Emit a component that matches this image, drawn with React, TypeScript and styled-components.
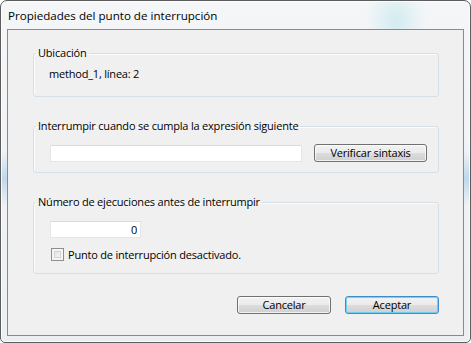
import styled, { createGlobalStyle } from "styled-components";

const GlobalStyle = createGlobalStyle`
	html, body {
		margin: 0;
		padding: 0;
		background: #ffffff;
	}

	body {
		font-family: "Segoe UI", "Open Sans", "Liberation Sans", sans-serif;
		font-size: 11px;
		color: #000000;
	}
`;

const Window = styled.div`
	width: 471px;
	height: 343px;
	box-sizing: border-box;
	display: flex;
	flex-direction: column;
	border: 1px solid #5c5c5c;
	border-radius: 7px 7px 5px 5px;
	overflow: hidden;
	background:
		radial-gradient(ellipse 30px 40px at 395px 20px, rgba(196, 232, 236, 0.7), transparent),
		linear-gradient(to bottom, transparent 44%, rgba(150, 194, 232, 0.55) 52%, transparent 60%),
		linear-gradient(to bottom, #f4f6f8, #eceff2);
	box-shadow: inset 0 0 0 1px rgba(255, 255, 255, 0.8);
`;

const TitleBar = styled.div`
	height: 28px;
	flex: none;
	box-sizing: border-box;
	padding: 7px 0 0 7px;
	line-height: 15px;
	font-size: 11.6px;
`;

const Client = styled.div`
	flex: 1;
	margin: 0 6px 6px;
	border: 1px solid #838b93;
	background: #f0f0f0;
	padding: 15px 24px 0 25px;
	display: flex;
	flex-direction: column;
	letter-spacing: -0.2px;
`;

const Group = styled.fieldset<{ $gap?: number }>`
	margin: ${(p) => p.$gap ?? 0}px 0 0;
	padding: 0;
	min-width: 0;
	border: 1px solid #d5dfe5;
	border-radius: 3px;
	box-shadow: inset 1px 1px 0 #fbfcfd;
`;

const Legend = styled.legend`
	margin-left: 2px;
	padding: 0 2px;
	line-height: 16px;
`;

const GroupBody = styled.div<{ $top: number; $bottom: number; $left?: number }>`
	padding: ${(p) => p.$top}px 11px ${(p) => p.$bottom}px ${(p) => p.$left ?? 16}px;
	display: flex;
	flex-direction: column;
`;

const PlainText = styled.div`
	line-height: 15px;
`;

const Row = styled.div`
	display: flex;
	align-items: center;
	gap: 12px;
`;

const TextBox = styled.input<{ $width: number; $right?: boolean }>`
	width: ${(p) => p.$width}px;
	height: 17px;
	box-sizing: border-box;
	margin: 0;
	padding: 0 3px;
	border: 1px solid #e3e6ea;
	border-top-color: #d8dce1;
	background: #ffffff;
	font: inherit;
	letter-spacing: inherit;
	text-align: ${(p) => (p.$right ? "right" : "left")};
	outline: none;
`;

const Button = styled.button<{ $width: number; $default?: boolean }>`
	width: ${(p) => p.$width}px;
	height: 18px;
	box-sizing: border-box;
	margin: 0;
	padding: 0;
	font: inherit;
	letter-spacing: inherit;
	line-height: 14px;
	color: #000000;
	border: 1px solid ${(p) => (p.$default ? "#3c8fcf" : "#707070")};
	border-radius: 3px;
	background: linear-gradient(
		to bottom,
		#f2f2f2 0%,
		#ebebeb 50%,
		#dddddd 51%,
		#cfcfcf 100%
	);
	box-shadow: inset 0 0 0 1px
		${(p) => (p.$default ? "rgba(100, 205, 245, 0.9)" : "rgba(255, 255, 255, 0.75)")};
`;

const CheckRow = styled.label`
	display: flex;
	align-items: center;
	gap: 4px;
	margin-top: 9px;
	margin-left: 1px;
	line-height: 15px;
`;

const CheckBox = styled.span`
	width: 13px;
	height: 13px;
	box-sizing: border-box;
	border: 1px solid #8e8f8f;
	background: linear-gradient(135deg, #dcdcdc, #fbfbfb);
	box-shadow: inset 0 0 0 2px #f4f4f4, inset 0 0 0 3px #d4d4d4;
`;

const Footer = styled.div`
	display: flex;
	justify-content: flex-end;
	gap: 14px;
	margin-top: 22px;
`;

export default function App() {
	return (
		<>
			<GlobalStyle />
			<Window>
				<TitleBar>Propiedades del punto de interrupción</TitleBar>
				<Client>
					<Group>
						<Legend>Ubicación</Legend>
						<GroupBody $top={5} $bottom={15} $left={15}>
							<PlainText>method_1, línea: 2</PlainText>
						</GroupBody>
					</Group>

					<Group $gap={21}>
						<Legend>Interrumpir cuando se cumpla la expresión siguiente</Legend>
						<GroupBody $top={10} $bottom={10}>
							<Row>
								<TextBox $width={252} defaultValue="" />
								<Button $width={113}>Verificar sintaxis</Button>
							</Row>
						</GroupBody>
					</Group>

					<Group $gap={21}>
						<Legend>Número de ejecuciones antes de interrumpir</Legend>
						<GroupBody $top={11} $bottom={11}>
							<TextBox $width={91} $right defaultValue="0" />
							<CheckRow>
								<CheckBox />
								Punto de interrupción desactivado.
							</CheckRow>
						</GroupBody>
					</Group>

					<Footer>
						<Button $width={94}>Cancelar</Button>
						<Button $width={94} $default>
							Aceptar
						</Button>
					</Footer>
				</Client>
			</Window>
		</>
	);
}
